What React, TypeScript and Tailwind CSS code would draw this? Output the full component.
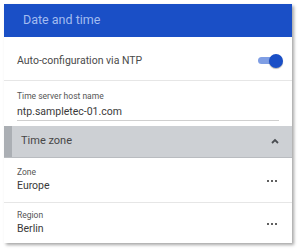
export default function App() {
  return (
    <div className="w-[300px] h-[251px] bg-white p-[4px]" style={{ fontFamily: 'Roboto, sans-serif' }}>
      <div className="w-[288px] bg-white shadow-[2px_2px_3px_rgba(0,0,0,0.35)]">
        {/* Header */}
        <div className="h-[33px] bg-[#1a4fc6] flex items-center pl-[19px]">
          <span className="text-[12.5px] text-[#a3bcf0]">Date and time</span>
        </div>

        {/* NTP toggle */}
        <div className="h-[44px] flex items-center justify-between pl-[13px] pr-[11px] pt-[4px] border-b border-[#e6e6e6]">
          <span className="text-[10.5px] text-[#4a4a4a]">Auto-configuration via NTP</span>
          <div className="relative w-[18px] h-[7px] mr-[5px] rounded-full bg-[#7f9ee4]">
            <div className="absolute right-[-7px] top-[-3.5px] w-[14px] h-[14px] rounded-full bg-[#1a4fc6] shadow-[0_1px_1px_rgba(0,0,0,0.3)]" />
          </div>
        </div>

        {/* Host name */}
        <div className="pl-[13px] pr-[13px] pt-[10px] pb-[5px]">
          <div className="text-[8.5px] text-[#555] leading-[11px]">Time server host name</div>
          <div className="text-[10.5px] text-[#3a3a3a] leading-[14px] mt-[3px] pb-[1px] border-b border-[#cfcfcf]">
            ntp.sampletec-01.com
          </div>
        </div>

        {/* Time zone section */}
        <div className="h-[32px] flex bg-[#cdd0d4] border-b border-[#b9bcc0]">
          <div className="w-[8px] bg-[#abafb4]" />
          <div className="flex-1 flex items-center justify-between pl-[9px] pr-[13px]">
            <span className="text-[11px] text-[#474747]">Time zone</span>
            <svg width="8" height="6" viewBox="0 0 8 6" className="mt-[-1px]">
              <path d="M1 5 L4 2 L7 5" fill="none" stroke="#4a4d52" strokeWidth="1.8" />
            </svg>
          </div>
        </div>

        {/* Zone */}
        <div className="h-[45px] flex items-center justify-between pl-[13px] pr-[15px] border-b border-[#e6e6e6]">
          <div>
            <div className="text-[8.5px] text-[#555] leading-[11px]">Zone</div>
            <div className="text-[10.5px] text-[#3a3a3a] leading-[14px] mt-[1px]">Europe</div>
          </div>
          <Dots />
        </div>

        {/* Region */}
        <div className="h-[40px] flex items-center justify-between pl-[13px] pr-[15px]">
          <div>
            <div className="text-[8.5px] text-[#555] leading-[11px]">Region</div>
            <div className="text-[10.5px] text-[#3a3a3a] leading-[14px] mt-[1px]">Berlin</div>
          </div>
          <Dots />
        </div>
      </div>
    </div>
  );
}

function Dots() {
  return (
    <div className="flex gap-[1.5px] mt-[2px]">
      <div className="w-[2.5px] h-[2.5px] rounded-[1px] bg-[#2b2b2b]" />
      <div className="w-[2.5px] h-[2.5px] rounded-[1px] bg-[#2b2b2b]" />
      <div className="w-[2.5px] h-[2.5px] rounded-[1px] bg-[#2b2b2b]" />
    </div>
  );
}
